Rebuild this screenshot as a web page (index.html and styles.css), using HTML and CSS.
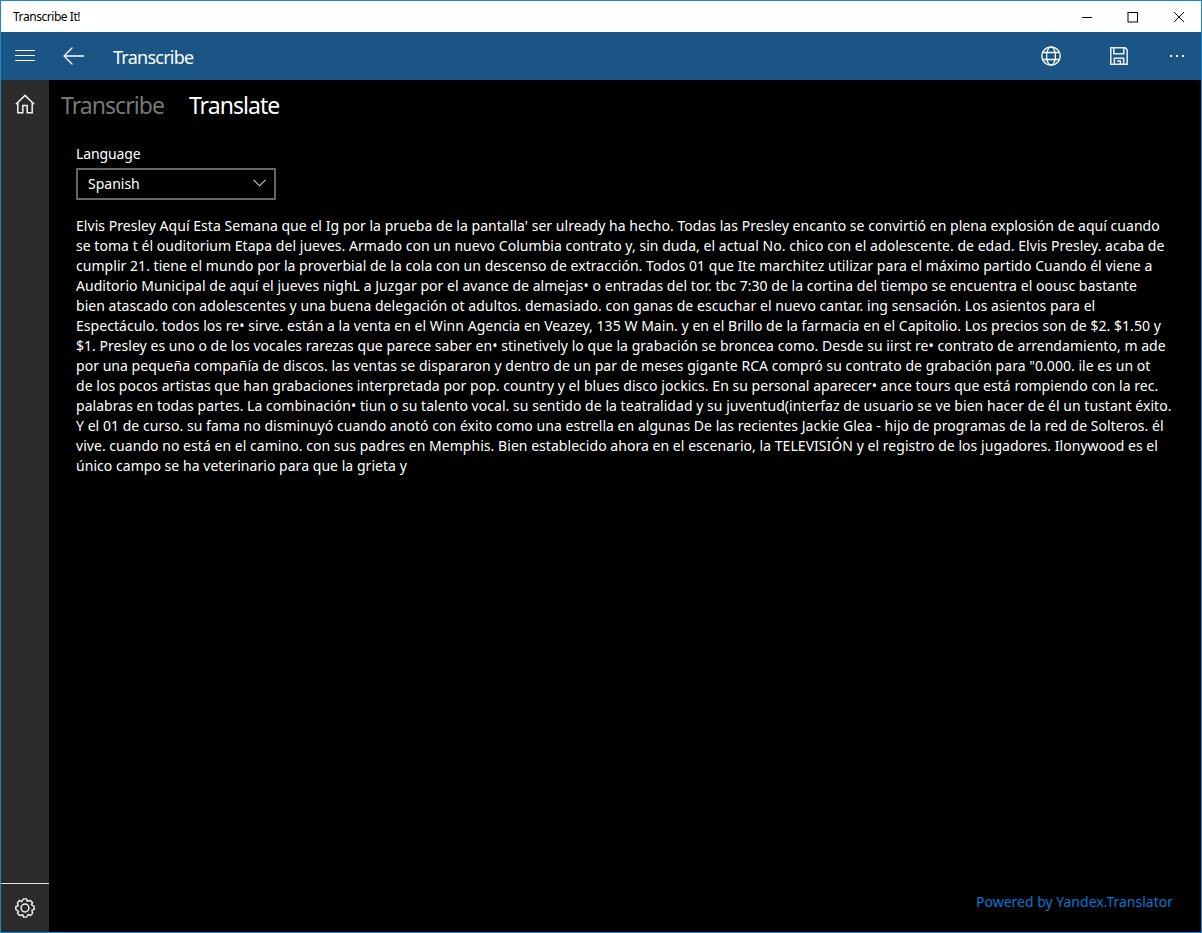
FILE: index.html
```html
<!DOCTYPE html>
<html lang="es">
<head>
<meta charset="utf-8">
<title>Transcribe It!</title>
<link rel="stylesheet" href="styles.css">
</head>
<body>
<div class="window">
  <header class="titlebar">
    <span class="title">Transcribe It!</span>
    <div class="caption">
      <span class="cap"><svg width="12" height="12" viewBox="0 0 12 12"><path d="M1 6.5h10" stroke="#000" fill="none"/></svg></span>
      <span class="cap"><svg width="12" height="12" viewBox="0 0 12 12"><rect x="1" y="1.5" width="9.5" height="9.5" stroke="#000" fill="none"/></svg></span>
      <span class="cap"><svg width="12" height="12" viewBox="0 0 12 12"><path d="M1 1l10 10M11 1L1 11" stroke="#000" fill="none"/></svg></span>
    </div>
  </header>
  <div class="appbar">
    <span class="appbtn"><svg width="20" height="12" viewBox="0 0 20 12"><path d="M0 .5h20M0 5.5h20M0 10.5h20" stroke="#fff" fill="none"/></svg></span>
    <span class="back"><svg width="21" height="18" viewBox="0 0 21 18"><path d="M9.5 .5L1 9l8.5 8.5M1 9h20" stroke="#fff" stroke-width="1.3" fill="none"/></svg></span>
    <span class="apptitle">Transcribe</span>
    <div class="actions">
      <span class="action"><svg width="20" height="20" viewBox="0 0 20 20" fill="none" stroke="#fff" stroke-width="1.3"><circle cx="10" cy="10" r="9.2"/><ellipse cx="10" cy="10" rx="4.4" ry="9.2"/><path d="M2 6.5h16M2 13.5h16"/></svg></span>
      <span class="action"><svg width="18" height="18" viewBox="0 0 18 18" fill="none" stroke="#e8eef4" stroke-width="1.5"><path d="M.8.8h14.4l2 2v14.4H.8z"/><path d="M3.8.8v6h10v-6M4.3 17.2v-6h9.4v6"/><path d="M7 14h3.4v3.2"/></svg></span>
      <span class="more"><svg width="14" height="2" viewBox="0 0 14 2" fill="#fff"><rect width="2" height="2"/><rect x="6" width="2" height="2"/><rect x="12" width="2" height="2"/></svg></span>
    </div>
  </div>
  <div class="body">
    <nav class="side">
      <span class="sideitem"><svg width="20" height="20" viewBox="0 0 20 20" fill="none" stroke="#f2f2f2" stroke-width="1.5"><path d="M.8 10.2L10 1.4l9.2 8.8"/><path d="M2.8 8.4v10.4h5V11.6h4.4v7.2h5V8.4"/></svg></span>
      <span class="sidefoot"><svg width="20" height="20" viewBox="0 0 20 20" fill="none" stroke="#f2f2f2" stroke-width="1.5"><circle cx="10" cy="10" r="3.9"/><path transform="translate(.5 .5) scale(.95)" d="M8.4 .4H11.6L12.3 2.7 15.66 2.08 17.92 4.34 16.79 6.47 19.6 8.4V11.6L17.3 12.3 17.92 15.66 15.66 17.92 13.53 16.79 11.6 19.6H8.4L7.7 17.3 4.34 17.92 2.08 15.66 3.21 13.53 .4 11.6V8.4L2.7 7.7 2.08 4.34 4.34 2.08 6.47 3.21z"/></svg></span>
    </nav>
    <main class="content">
      <div class="tabs"><span class="tab dim">Transcribe</span><span class="tab">Translate</span></div>
      <label class="label">Language</label>
      <div class="select"><span>Spanish</span><svg width="13" height="8" viewBox="0 0 13 8"><path d="M.5.8L6.5 6.8 12.5.8" stroke="#ccc" stroke-width="1.1" fill="none"/></svg></div>
      <div class="text">
        <div>Elvis Presley Aquí Esta Semana que el Ig por la prueba de la pantalla' ser ulready ha hecho. Todas las Presley encanto se convirtió en plena explosión de aquí cuando</div>
        <div>se toma t él ouditorium Etapa del jueves. Armado con un nuevo Columbia contrato y, sin duda, el actual No. chico con el adolescente. de edad. Elvis Presley. acaba de</div>
        <div>cumplir 21. tiene el mundo por la proverbial de la cola con un descenso de extracción. Todos 01 que Ite marchitez utilizar para el máximo partido Cuando él viene a</div>
        <div>Auditorio Municipal de aquí el jueves nighL a Juzgar por el avance de almejas• o entradas del tor. tbc 7:30 de la cortina del tiempo se encuentra el oousc bastante</div>
        <div>bien atascado con adolescentes y una buena delegación ot adultos. demasiado. con ganas de escuchar el nuevo cantar. ing sensación. Los asientos para el</div>
        <div>Espectáculo. todos los re• sirve. están a la venta en el Winn Agencia en Veazey, 135 W Main. y en el Brillo de la farmacia en el Capitolio. Los precios son de $2. $1.50 y</div>
        <div>$1. Presley es uno o de los vocales rarezas que parece saber en• stinetively lo que la grabación se broncea como. Desde su iirst re• contrato de arrendamiento, m ade</div>
        <div>por una pequeña compañía de discos. las ventas se dispararon y dentro de un par de meses gigante RCA compró su contrato de grabación para "0.000. ile es un ot</div>
        <div>de los pocos artistas que han grabaciones interpretada por pop. country y el blues disco jockics. En su personal aparecer• ance tours que está rompiendo con la rec.</div>
        <div>palabras en todas partes. La combinación• tiun o su talento vocal. su sentido de la teatralidad y su juventud(interfaz de usuario se ve bien hacer de él un tustant éxito.</div>
        <div>Y el 01 de curso. su fama no disminuyó cuando anotó con éxito como una estrella en algunas De las recientes Jackie Glea - hijo de programas de la red de Solteros. él</div>
        <div>vive. cuando no está en el camino. con sus padres en Memphis. Bien establecido ahora en el escenario, la TELEVISIÓN y el registro de los jugadores. Ilonywood es el</div>
        <div>único campo se ha veterinario para que la grieta y</div>
      </div>
      <div class="powered">Powered by Yandex.Translator</div>
    </main>
  </div>
</div>
</body>
</html>
```
FILE: styles.css
```css
* { box-sizing: border-box; }
html, body { margin: 0; height: 100%; overflow: hidden; }
body { font-family: "Noto Sans", "Open Sans", sans-serif; background: #000; }
.window { width: 1202px; height: 933px; border: 1px solid #1a86d0; display: flex; flex-direction: column; }
.titlebar { height: 31px; flex: none; background: #fff; color: #000; display: flex; align-items: center; justify-content: space-between; padding-left: 12px; }
.title { font-size: 12px; letter-spacing: -.45px; }
.caption { display: flex; }
.cap { width: 46px; height: 31px; display: flex; align-items: center; justify-content: center; }
.caption .cap:last-child { width: 45px; }
.appbar { height: 48px; flex: none; background: #1a5585; color: #fff; display: flex; align-items: center; }
.appbtn { width: 48px; display: flex; justify-content: center; }
.back { width: 48px; display: flex; justify-content: center; }
.apptitle { font-size: 18px; line-height: 24px; padding-top: 2px; margin-left: 16px; letter-spacing: -.75px; }
.actions { margin-left: auto; display: flex; align-items: center; }
.action { width: 68px; display: flex; justify-content: center; }
.more { width: 48px; display: flex; justify-content: center; }
.body { flex: 1; display: flex; min-height: 0; }
.side { width: 48px; background: #2b2b2b; display: flex; flex-direction: column; align-items: stretch; }
.sideitem { height: 48px; display: flex; align-items: center; justify-content: center; }
.sidefoot { margin-top: auto; height: 49px; border-top: 1px solid #e6e6e6; display: flex; align-items: center; justify-content: center; }
.content { flex: 1; position: relative; padding: 0 27px; color: #fff; }
.tabs { display: flex; gap: 25px; margin-left: -15px; height: 52px; padding-top: 8px; line-height: 35px; }
.tab { font-size: 23px; letter-spacing: -.95px; }
.dim { color: #777; }
.label { display: block; font-size: 14px; line-height: 20px; letter-spacing: -.1px; margin-top: 12px; }
.select { width: 200px; height: 32px; margin-top: 4px; border: 2px solid #666; display: flex; align-items: center; justify-content: space-between; padding: 0 8px 2px 10px; font-size: 14px; }
.text { margin-top: 16px; font-size: 14px; line-height: 20px; white-space: nowrap; letter-spacing: .04px; }
.powered { position: absolute; right: 28px; bottom: 20px; font-size: 14px; line-height: 20px; color: #0078d7; }
```
